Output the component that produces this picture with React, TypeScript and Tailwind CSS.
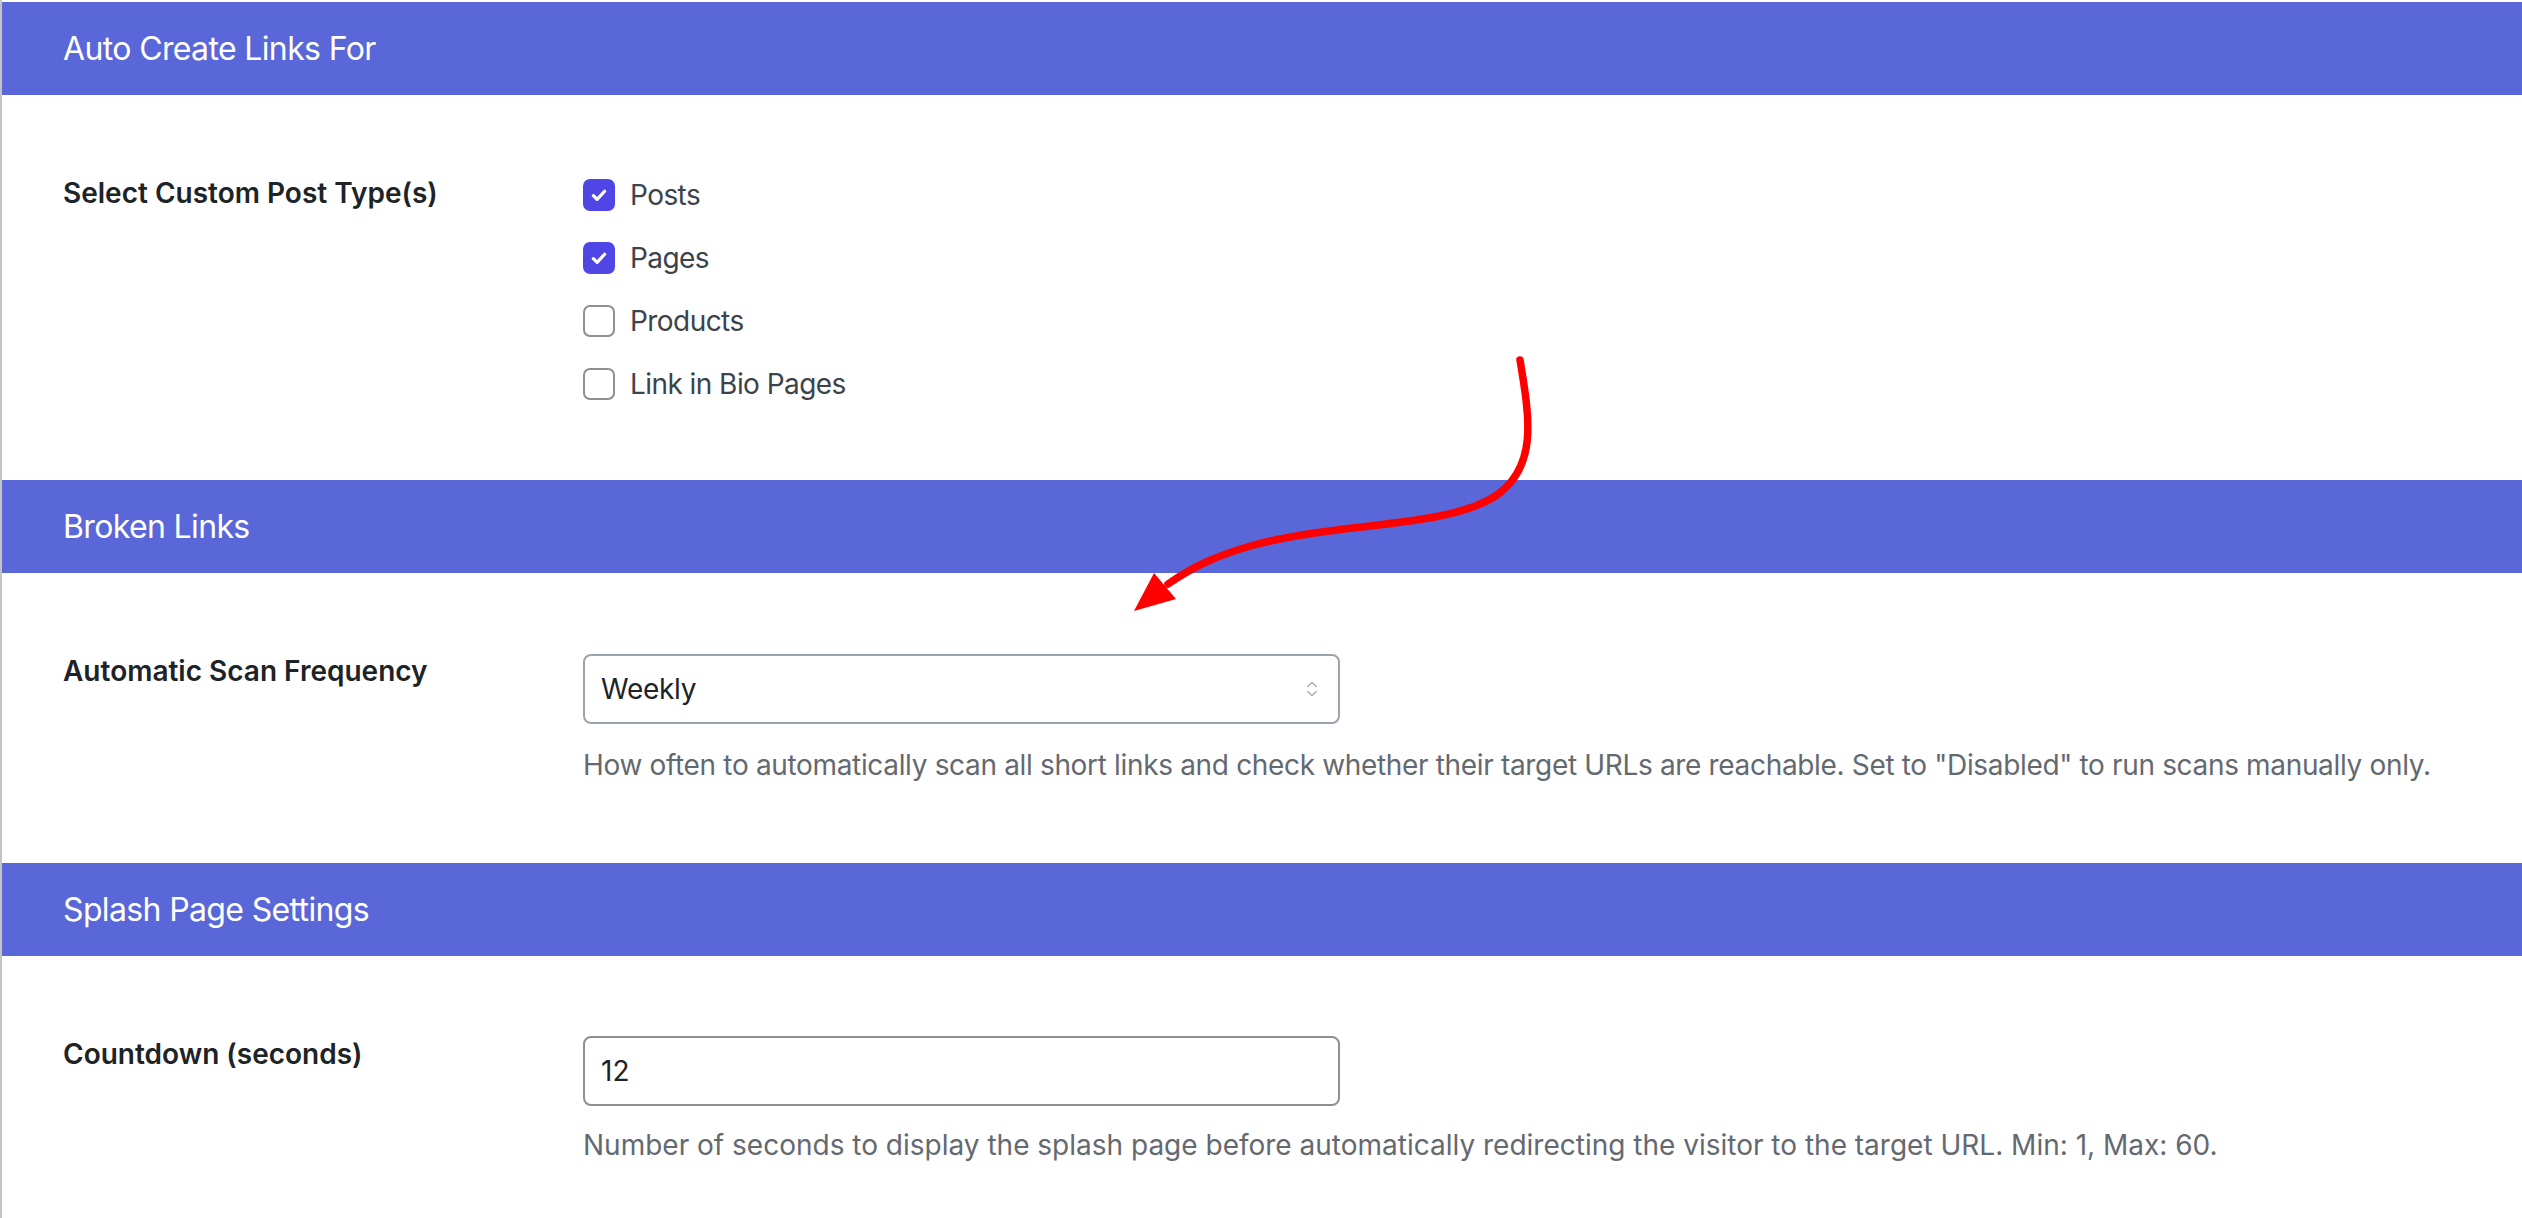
import { ChevronsUpDown } from 'lucide-react';

const Check = () => (
  <svg viewBox="0 0 16 16" className="w-[20px] h-[20px]" fill="none">
    <path d="M3.5 8.5 L6.5 11.5 L12.5 5" stroke="white" strokeWidth="2.6" strokeLinecap="round" strokeLinejoin="round" />
  </svg>
);

const SectionHeader = ({ title }: { title: string }) => (
  <div className="h-[93px] bg-[#5a67d8] px-[61px] flex items-center text-white text-[32px] leading-none tracking-[-0.02em]">
    {title}
  </div>
);

const Label = ({ children }: { children: string }) => (
  <div className="w-[520px] shrink-0 text-[28px] leading-[42px] font-semibold text-[#1d2327]">
    {children}
  </div>
);

const postTypes = [
  { name: 'Posts', checked: true },
  { name: 'Pages', checked: true },
  { name: 'Products', checked: false },
  { name: 'Link in Bio Pages', checked: false },
];

export default function App() {
  return (
    <div className="relative w-[2522px] h-[1218px] overflow-hidden bg-white font-['Inter',sans-serif] border-l-2 border-[#c3c4c7] pt-[2px]">
      <SectionHeader title="Auto Create Links For" />
      <div className="flex px-[61px] pt-[77px] pb-[80px]">
        <Label>Select Custom Post Type(s)</Label>
        <div className="mt-[7px] flex flex-col gap-[31px]">
          {postTypes.map((p) => (
            <label key={p.name} className="flex items-center h-[32px] gap-[15px] text-[28px] tracking-[-0.02em] text-[#3c434a]">
              {p.checked ? (
                <span className="w-[32px] h-[32px] rounded-[7px] bg-[#4f46e5] flex items-center justify-center">
                  <Check />
                </span>
              ) : (
                <span className="w-[32px] h-[32px] rounded-[7px] border-2 border-[#8c8f94] bg-white" />
              )}
              {p.name}
            </label>
          ))}
        </div>
      </div>

      <SectionHeader title="Broken Links" />
      <div className="flex px-[61px] pt-[77px] pb-[77px]">
        <Label>Automatic Scan Frequency</Label>
        <div className="mt-[4px]">
          <div className="w-[757px] h-[70px] rounded-[8px] border-2 border-[#9ca3af] flex items-center justify-between pl-[16px] pr-[16px] text-[28px] tracking-[-0.01em] text-[#1d2327]">
            <span>Weekly</span>
            <ChevronsUpDown className="w-[20px] h-[22px] text-[#9ca3af]" strokeWidth={1.5} />
          </div>
          <p className="mt-[20px] text-[28px] leading-[42px] tracking-[-0.012em] text-[#646970] whitespace-nowrap">
            How often to automatically scan all short links and check whether their target URLs are reachable. Set to "Disabled" to run scans manually only.
          </p>
        </div>
      </div>

      <SectionHeader title="Splash Page Settings" />
      <div className="flex px-[61px] pt-[77px] pb-[60px]">
        <Label>Countdown (seconds)</Label>
        <div className="mt-[3px]">
          <div className="w-[757px] h-[70px] rounded-[8px] border-2 border-[#8c8f94] flex items-center pl-[16px] text-[28px] text-[#1d2327]">
            12
          </div>
          <p className="mt-[18px] text-[28px] leading-[42px] text-[#646970] whitespace-nowrap">
            Number of seconds to display the splash page before automatically redirecting the visitor to the target URL. Min: 1, Max: 60.
          </p>
        </div>
      </div>

      {/* annotation arrow */}
      <svg className="absolute inset-0 pointer-events-none" width="2522" height="1218" viewBox="0 0 2522 1218">
        <path
          d="M1518 360 C1528 420 1536 468 1492 497 C1442 528 1338 522 1252 545 C1216 555 1192 566 1166 584"
          stroke="#ff0000"
          strokeWidth="7.5"
          fill="none"
          strokeLinecap="round"
        />
        <polygon points="1132,611 1152,573 1174,599" fill="#ff0000" />
      </svg>
    </div>
  );
}
